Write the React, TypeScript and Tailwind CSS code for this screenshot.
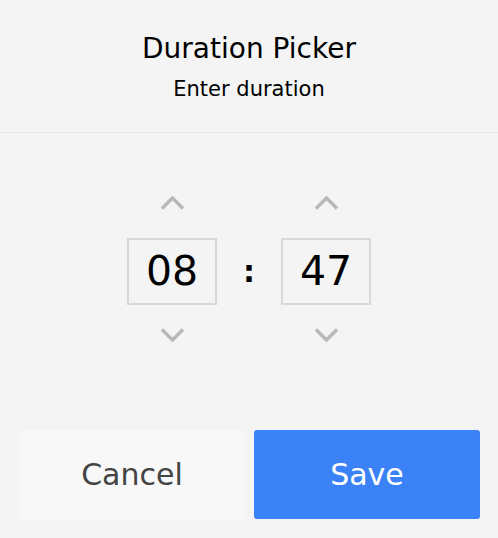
import { useState } from 'react';

function Chevron({ dir }: { dir: 'up' | 'down' }) {
  return (
    <svg width="25" height="14" viewBox="0 0 25 14" fill="none" className="block text-[#b8b8b8]">
      <path
        d={dir === 'up' ? 'M2 12.5 L12.5 2 L23 12.5' : 'M2 1.5 L12.5 12 L23 1.5'}
        stroke="currentColor"
        strokeWidth="3.5"
        strokeLinejoin="miter"
      />
    </svg>
  );
}

function Spinner({ value, onUp, onDown }: { value: string; onUp: () => void; onDown: () => void }) {
  return (
    <div className="flex flex-col items-center">
      <button onClick={onUp} className="block">
        <Chevron dir="up" />
      </button>
      <div className="mt-[28px] w-[90px] h-[67px] border-2 border-[#d8d8d8] flex items-center justify-center text-[41px] text-black">
        {value}
      </div>
      <button onClick={onDown} className="mt-[23px] block">
        <Chevron dir="down" />
      </button>
    </div>
  );
}

export default function App() {
  const [min, setMin] = useState(8);
  const [sec, setSec] = useState(47);
  const pad = (n: number) => String(n).padStart(2, '0');

  return (
    <div className="w-[498px] h-[538px] bg-[#f4f4f4] flex flex-col font-['DejaVu_Sans',sans-serif]">
      <div className="h-[133px] border-b border-[#e6e6e6] flex flex-col items-center pt-[31px]">
        <div className="text-[28px] leading-[36px] text-black">Duration Picker</div>
        <div className="text-[21px] leading-[28px] mt-[8px] text-black">Enter duration</div>
      </div>

      <div className="flex items-start justify-center gap-[26px] pt-[63px]">
        <Spinner value={pad(min)} onUp={() => setMin((m) => (m + 1) % 100)} onDown={() => setMin((m) => (m + 99) % 100)} />
        <div className="mt-[42px] h-[67px] flex items-center text-[30px] font-bold text-black">:</div>
        <Spinner value={pad(sec)} onUp={() => setSec((s) => (s + 1) % 60)} onDown={() => setSec((s) => (s + 59) % 60)} />
      </div>

      <div className="mt-auto flex gap-[10px] pl-[20px] pr-[18px] pb-[19px]">
        <button className="w-[224px] h-[89px] rounded-[3px] bg-[#f8f8f8] text-[#444] text-[30px]">Cancel</button>
        <button className="flex-1 h-[89px] rounded-[3px] bg-[#3b82f6] text-white text-[30px]">Save</button>
      </div>
    </div>
  );
}
